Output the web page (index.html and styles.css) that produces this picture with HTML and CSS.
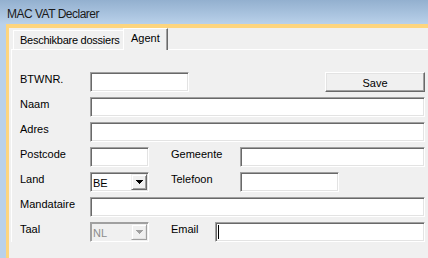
FILE: index.html
```html
<!DOCTYPE html>
<html lang="nl">
<head>
  <meta charset="UTF-8" />
  <title>MAC VAT Declarer</title>
  <link rel="stylesheet" href="styles.css">
</head>
<body>
  <div class="titlebar">MAC VAT Declarer</div>
  <div class="frame">
    <div class="inner">
      <div class="tabs">
        <div class="tab">Beschikbare dossiers</div>
        <div class="tab active">Agent</div>
      </div>
      <div class="page">
        <div class="row">
          <div class="label">BTWNR.</div>
          <div class="field field-medium"></div>
          <button class="save">Save</button>
        </div>
        <div class="row">
          <div class="label">Naam</div>
          <div class="field field-full"></div>
        </div>
        <div class="row">
          <div class="label">Adres</div>
          <div class="field field-full"></div>
        </div>
        <div class="row">
          <div class="label">Postcode</div>
          <div class="field field-short"></div>
          <div class="label label-right">Gemeente</div>
          <div class="field field-gemeente"></div>
        </div>
        <div class="row">
          <div class="label">Land</div>
          <div class="field combo">
            <span class="combo-text">BE</span>
            <span class="combo-btn">
              <svg width="7" height="4" viewBox="0 0 7 4" shape-rendering="crispEdges">
                <rect x="0" y="0" width="7" height="1" fill="#000"/>
                <rect x="1" y="1" width="5" height="1" fill="#000"/>
                <rect x="2" y="2" width="3" height="1" fill="#000"/>
                <rect x="3" y="3" width="1" height="1" fill="#000"/>
              </svg>
            </span>
          </div>
          <div class="label label-right">Telefoon</div>
          <div class="field field-medium"></div>
        </div>
        <div class="row">
          <div class="label">Mandataire</div>
          <div class="field field-full"></div>
        </div>
        <div class="row">
          <div class="label">Taal</div>
          <div class="field combo disabled">
            <span class="combo-text">NL</span>
            <span class="combo-btn">
              <svg width="7" height="4" viewBox="0 0 7 4" shape-rendering="crispEdges">
                <rect x="0" y="0" width="7" height="1" fill="#a0a0a0"/>
                <rect x="1" y="1" width="5" height="1" fill="#a0a0a0"/>
                <rect x="2" y="2" width="3" height="1" fill="#a0a0a0"/>
                <rect x="3" y="3" width="1" height="1" fill="#a0a0a0"/>
              </svg>
            </span>
          </div>
          <div class="label label-right label-email">Email</div>
          <div class="field field-email"><span class="caret"></span></div>
        </div>
      </div>
    </div>
  </div>
</body>
</html>
```

FILE: styles.css
```css
body {
  margin: 0;
  width: 428px;
  height: 258px;
  overflow: hidden;
  background: #f0f0f0;
  font-family: "Liberation Sans", Arial, sans-serif;
  font-size: 11px;
  color: #000;
}

.titlebar {
  height: 24px;
  box-sizing: border-box;
  padding: 7px 0 0 7px;
  font-size: 12px;
  line-height: 15px;
  letter-spacing: -0.5px;
  background: linear-gradient(#93b0cf, #b9d1ea);
  color: #1a1a1a;
}

.frame {
  height: 234px;
  border-left: 6px solid #b9d1ea;
}

.inner {
  height: 100%;
  box-sizing: border-box;
  border-top: 4px solid #fdd57e;
  border-left: 3px solid #fdd57e;
}

.tabs {
  display: flex;
  align-items: flex-end;
  height: 21px;
  padding-left: 4px;
}

.tab {
  width: 110px;
  height: 19px;
  box-sizing: border-box;
  border-top: 1px solid #fff;
  border-left: 1px solid #fff;
  padding: 3px 0 0 6px;
  line-height: 13px;
  letter-spacing: -0.25px;
  white-space: nowrap;
}

.tab.active {
  width: 45px;
  height: 22px;
  margin-bottom: -1px;
  padding-left: 7px;
  letter-spacing: 0;
  border-right: 1px solid #696969;
  box-shadow: inset -1px 0 #a0a0a0;
  background: #f0f0f0;
  position: relative;
  z-index: 1;
}

.page {
  margin-left: 2px;
  border-top: 1px solid #fff;
  border-left: 1px solid #fff;
  padding: 22px 0 0 8px;
  display: flex;
  flex-direction: column;
  gap: 5px;
}

.row {
  display: flex;
  height: 20px;
}

.label {
  width: 70px;
  padding-top: 1px;
  line-height: 13px;
  white-space: nowrap;
}

.label-right {
  width: 69px;
  margin-left: 22px;
}

.label-email {
  width: 44px;
}

.field {
  box-sizing: border-box;
  height: 20px;
  background: #fff;
  border: 1px solid;
  border-color: #a0a0a0 #fff #fff #a0a0a0;
  box-shadow: inset 1px 1px #696969, inset -1px -1px #e3e3e3;
}

.field-medium { width: 99px; }
.field-full { width: 335px; }
.field-short { width: 59px; }
.field-gemeente { width: 185px; }
.field-email { width: 210px; }

.save {
  margin-left: 136px;
  width: 100px;
  height: 20px;
  box-sizing: border-box;
  padding: 3px 0 0;
  font-family: inherit;
  font-size: 11px;
  line-height: 13px;
  color: #000;
  text-align: center;
  vertical-align: top;
  background: #f0f0f0;
  border: 1px solid;
  border-color: #fff #696969 #696969 #fff;
  box-shadow: inset -1px -1px #a0a0a0, inset 1px 1px #e3e3e3;
  border-radius: 0;
}

.combo {
  width: 59px;
  display: flex;
  align-items: flex-start;
  padding: 1px;
}

.combo-text {
  flex: 1;
  padding: 3px 0 0 1px;
  line-height: 13px;
}

.combo-btn {
  width: 16px;
  height: 16px;
  box-sizing: border-box;
  display: flex;
  align-items: center;
  justify-content: center;
  background: #f0f0f0;
  border: 1px solid;
  border-color: #f0f0f0 #696969 #696969 #f0f0f0;
  box-shadow: inset 1px 1px #fff, inset -1px -1px #a0a0a0;
}

.combo.disabled {
  background: #f0f0f0;
  box-shadow: inset 1px 1px #a0a0a0, inset -1px -1px #f0f0f0;
}

.combo.disabled .combo-text {
  color: #8d8d8d;
}

.combo.disabled .combo-btn {
  border-color: #f0f0f0 #a0a0a0 #a0a0a0 #f0f0f0;
  box-shadow: inset 1px 1px #fff, inset -1px -1px #e3e3e3;
}

.caret {
  display: block;
  width: 1px;
  height: 14px;
  margin: 2px 0 0 2px;
  background: #000;
}
```
